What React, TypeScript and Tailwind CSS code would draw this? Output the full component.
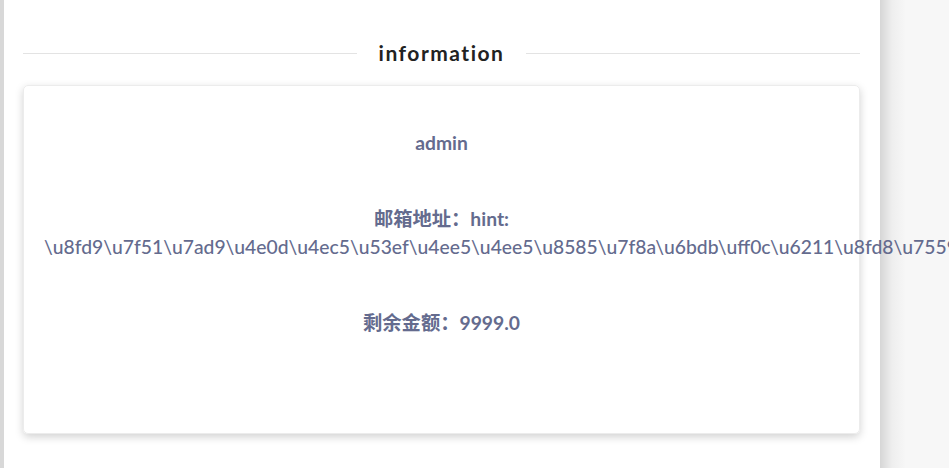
import React from 'react';

const hintText =
  '\\u8fd9\\u7f51\\u7ad9\\u4e0d\\u4ec5\\u53ef\\u4ee5\\u4ee5\\u8585\\u7f8a\\u6bdb\\uff0c\\u6211\\u8fd8\\u7559\\u4e86\\u4e00\\u4e2a\\u540e\\u95e8';

const InfoRow: React.FC<{ children: React.ReactNode; className?: string }> = ({ children, className = '' }) => (
  <div className={`text-[19.3px] leading-[28px] text-[#646b8e] ${className}`}>{children}</div>
);

export default function App() {
  return (
    <div className="flex h-[468px] w-[949px] overflow-hidden bg-[#f7f7f7] font-['Lato','Noto_Sans_CJK_SC',sans-serif]">
      <div className="w-[4px] shrink-0 bg-[#d8d8d8]" />
      <div className="relative z-10 w-[876px] shrink-0 bg-white pl-[19px] pr-[20px] pt-[38px]">
        <div className="flex items-center gap-[22px]">
          <div className="h-px flex-1 bg-[#e3e3e3]" />
          <h2 className="text-[21px] font-bold leading-[30px] tracking-[1.5px] text-[#222]">information</h2>
          <div className="h-px flex-1 bg-[#e3e3e3]" />
        </div>
        <div className="mt-[17px] h-[349px] rounded-[5px] border border-[#ececec] px-[20px] pt-[43px] text-center shadow-[0_3px_8px_rgba(0,0,0,0.18)]">
          <InfoRow className="font-bold">admin</InfoRow>
          <InfoRow className="mt-[48px]">
            <span className="font-bold">邮箱地址：hint: </span>
            <span className="font-medium">{hintText}</span>
          </InfoRow>
          <InfoRow className="mt-[48px] font-bold">剩余金额：9999.0</InfoRow>
        </div>
      </div>
      <div className="flex-1 bg-[linear-gradient(to_right,#d6d6d6,#eeeeee_12px,#f7f7f7_26px)]" />
    </div>
  );
}
